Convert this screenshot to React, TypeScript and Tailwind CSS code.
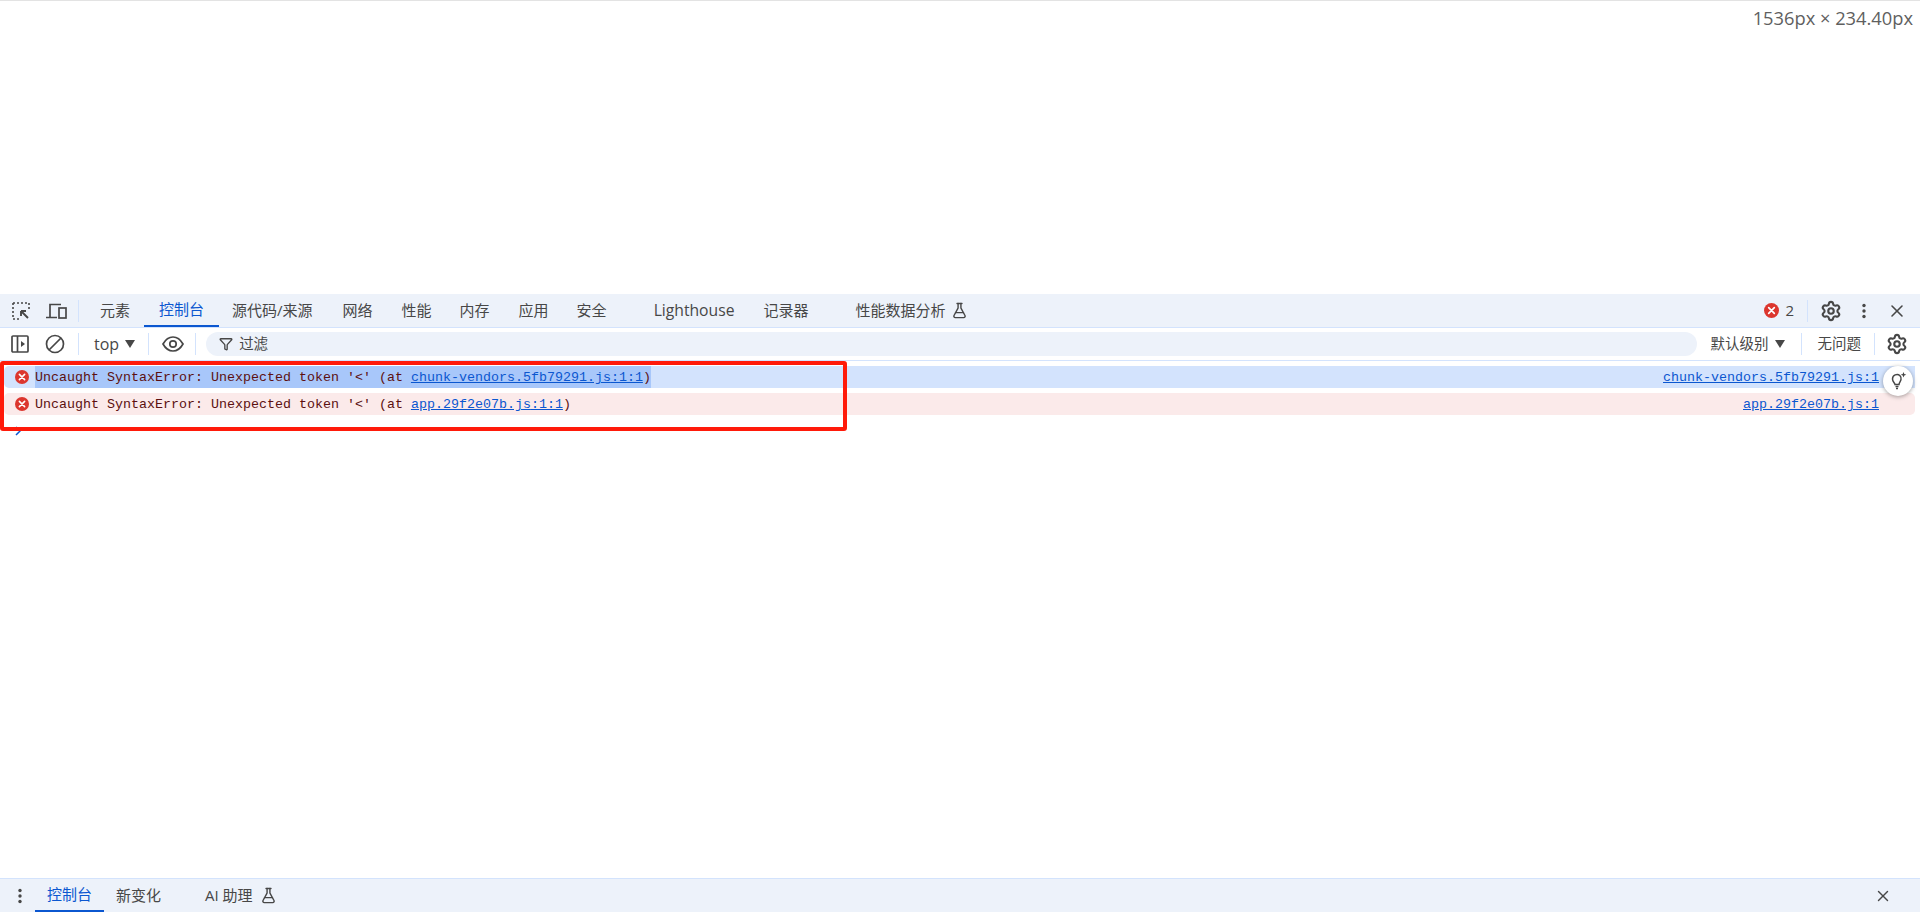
import { FlaskConical, Funnel, Settings, X } from "lucide-react";

const sans = "font-['Open_Sans','Noto_Sans_CJK_SC',sans-serif]";
const mono = "font-['Liberation_Mono','Noto_Sans_CJK_SC',monospace]";

const tabs = [
	{ name: "元素", cls: "pl-[21px] pr-[14px]" },
	{ name: "控制台", cls: "px-[15px] text-[#0b57d0] border-b-2 border-[#0b57d0]" },
	{ name: "源代码/来源", cls: "pl-[13px] pr-[15px]" },
	{ name: "网络", cls: "px-[15px]" },
	{ name: "性能", cls: "px-[14px]" },
	{ name: "内存", cls: "pl-[14px] pr-[15px]" },
	{ name: "应用", cls: "px-[14px]" },
	{ name: "安全", cls: "pl-[14px] pr-[47px]" },
	{ name: "Lighthouse", cls: "pr-[29px] text-[15.7px]" },
	{ name: "记录器", cls: "pr-[47px]" },
];

function Sep({ cls = "" }: { cls?: string }) {
	return <div className={`w-px h-[22px] bg-[#d3e3fd] ${cls}`} />;
}

function ErrorIcon({ size = 15 }: { size?: number }) {
	return (
		<svg width={size} height={size} viewBox="0 0 16 16" className="shrink-0">
			<circle cx="8" cy="8" r="8" fill="#dc362e" />
			<path d="M5 5l6 6M11 5l-6 6" stroke="#fff" strokeWidth="1.8" strokeLinecap="round" />
		</svg>
	);
}

function Kebab() {
	return (
		<svg width="6" height="16" viewBox="0 0 6 16" fill="#474747">
			<circle cx="3" cy="2.5" r="1.7" />
			<circle cx="3" cy="8" r="1.7" />
			<circle cx="3" cy="13.5" r="1.7" />
		</svg>
	);
}

function Row({ file, selected }: { file: string; selected?: boolean }) {
	return (
		<div
			className={`flex items-center h-[22px] ml-[4px] mr-[5px] pl-[11px] pr-[36px] rounded-[5px] ${selected ? "bg-[#d3e3fd] rounded-r-none" : "bg-[#fbeaea]"}`}
		>
			<ErrorIcon size={14} />
			<div className={`ml-[6px] h-[22px] pt-[2px] text-[13.33px] leading-[20px] whitespace-pre text-[#5c1010] ${mono} ${selected ? "bg-[#a8c7fa]" : ""}`}>
				{"Uncaught SyntaxError: Unexpected token '<' (at "}
				<span className="text-[#0b57d0] underline">{file}:1:1</span>)
			</div>
			<div className={`ml-auto h-[22px] pt-[2px] text-[13.33px] leading-[20px] whitespace-pre text-[#0b57d0] underline ${mono}`}>{file}:1</div>
		</div>
	);
}

export default function App() {
	return (
		<div className={`relative flex flex-col h-[912px] w-full overflow-hidden bg-white text-[#474747] text-[15px] ${sans}`}>
			<div className="h-[294px] border-t border-[#e3e3e3] flex justify-end pr-[7px] pt-[5px]">
				<span className="text-[18.3px] leading-[24px] text-[#5f5f5f]">1536px × 234.40px</span>
			</div>

			{/* tab bar */}
			<div className="flex items-center h-[34px] bg-[#edf2fa] border-b border-[#d3e3fd]">
				<svg width="20" height="20" viewBox="0 0 20 20" fill="none" stroke="#474747" strokeWidth="1.6" className="ml-[11px]">
					<path d="M2 2h14M2 2v14M2 18h6M18 2v7" strokeDasharray="2 2" />
					<path d="M10 10l7 7M10 10h5M10 10v5" strokeWidth="1.9" />
				</svg>
				<svg width="21" height="18" viewBox="0 0 21 18" fill="none" stroke="#474747" strokeWidth="1.7" className="ml-[15px]">
					<path d="M4 15V2.5h11M0 15.5h11" />
					<rect x="13" y="6" width="7" height="10" />
				</svg>
				<Sep cls="ml-[11px]" />
				{tabs.map((t) => (
					<div key={t.name} className={`h-full flex items-center ${t.cls}`}>
						{t.name}
					</div>
				))}
				<span>性能数据分析</span>
				<FlaskConical size={17} strokeWidth={2} className="ml-[5px]" />
				<div className="ml-auto flex items-center">
					<ErrorIcon />
					<span className="ml-[6px] text-[15px]">2</span>
					<Sep cls="ml-[13px]" />
					<Settings size={22} strokeWidth={2.3} className="ml-[12px]" />
					<div className="ml-[19px]">
						<Kebab />
					</div>
					<X size={20} strokeWidth={1.9} className="ml-[20px] mr-[13px]" />
				</div>
			</div>

			{/* toolbar */}
			<div className="flex items-center h-[33px] border-b border-[#d3e3fd]">
				<svg width="18" height="18" viewBox="0 0 18 18" fill="none" stroke="#474747" strokeWidth="1.7" className="ml-[11px]">
					<rect x="1" y="1" width="16" height="16" rx="1" />
					<path d="M6.5 1v16" />
					<path d="M10 6l4 3-4 3z" fill="#474747" stroke="none" />
				</svg>
				<svg width="20" height="20" viewBox="0 0 20 20" fill="none" stroke="#474747" strokeWidth="1.7" className="ml-[16px]">
					<circle cx="10" cy="10" r="8.5" />
					<path d="M4 16L16 4" />
				</svg>
				<Sep cls="ml-[13px]" />
				<span className="ml-[15px] text-[16px]">top</span>
				<svg width="10" height="8" viewBox="0 0 10 8" fill="#474747" className="ml-[6px]">
					<path d="M0 0h10L5 8z" />
				</svg>
				<Sep cls="ml-[13px]" />
				<svg width="22" height="16" viewBox="0 0 22 16" fill="none" stroke="#474747" strokeWidth="1.7" className="ml-[13px]">
					<path d="M1 8c2.5-4.500 6-7 10-7s7.500 2.500 10 7c-2.500 4.500-6 7-10 7S3.500 12.500 1 8z" />
					<circle cx="11" cy="8" r="3.200" />
				</svg>
				<Sep cls="ml-[11px]" />
				<div className="ml-[10px] flex-1 h-[24px] rounded-full bg-[#edf2fa] flex items-center pl-[13px]">
					<Funnel size={14} strokeWidth={2.3} />
					<span className="ml-[6px] text-[14.5px]">过滤</span>
				</div>
				<span className="ml-[14px] text-[14.5px]">默认级别</span>
				<svg width="10" height="8" viewBox="0 0 10 8" fill="#474747" className="ml-[6px]">
					<path d="M0 0h10L5 8z" />
				</svg>
				<Sep cls="ml-[16px]" />
				<span className="ml-[16px] text-[14.5px]">无问题</span>
				<Sep cls="ml-[13px]" />
				<Settings size={22} strokeWidth={2.3} className="ml-[11px] mr-[12px]" />
			</div>

			{/* console rows */}
			<div className="flex-1 flex flex-col gap-[5px] pt-[5px]">
				<Row file="chunk-vendors.5fb79291.js" selected />
				<Row file="app.29f2e07b.js" />
				<svg width="8" height="10" viewBox="0 0 8 10" fill="none" stroke="#0b57d0" strokeWidth="1.5" className="ml-[14px] mt-[6px]">
					<path d="M2 1l4 4-4 4" />
				</svg>
			</div>

			{/* drawer */}
			<div className="flex items-center h-[34px] bg-[#edf2fa] border-t border-[#d3e3fd] text-[15px]">
				<div className="ml-[17px]">
					<Kebab />
				</div>
				<div className="ml-[12px] h-full flex items-center px-[12px] text-[#0b57d0] border-b-2 border-[#0b57d0]">控制台</div>
				<span className="ml-[12px]">新变化</span>
				<span className="ml-[44px]">AI 助理</span>
				<FlaskConical size={17} strokeWidth={2} className="ml-[7px]" />
				<X size={18} strokeWidth={1.9} className="ml-auto mr-[28px]" />
			</div>

			{/* annotation box */}
			<div className="absolute left-0 top-[361px] w-[847px] h-[70px] border-4 border-[#ff1a0a] rounded-[3px]" />

			{/* floating AI button */}
			<div className="absolute left-[1883px] top-[366px] w-[30px] h-[30px] rounded-full bg-white shadow-[0_1px_4px_rgba(0,0,0,0.35)] flex items-center justify-center">
				<svg width="20" height="20" viewBox="0 0 20 20" fill="none" stroke="#474747" strokeWidth="1.5">
					<path d="M7 13.5c0-1.500-2.500-2.500-2.500-5.500a4.500 4.500 0 0 1 7.500-3.300c1 1 1.500 2.100 1 4-.4 1.800-2 3-2 4.800z" />
					<path d="M7.5 15.5h3M8 17.500h2" />
					<path d="M15.500 1l.8 2 2 .8-2 .8-.8 2-.8-2-2-.8 2-.8z" fill="#474747" stroke="none" />
				</svg>
			</div>
		</div>
	);
}
